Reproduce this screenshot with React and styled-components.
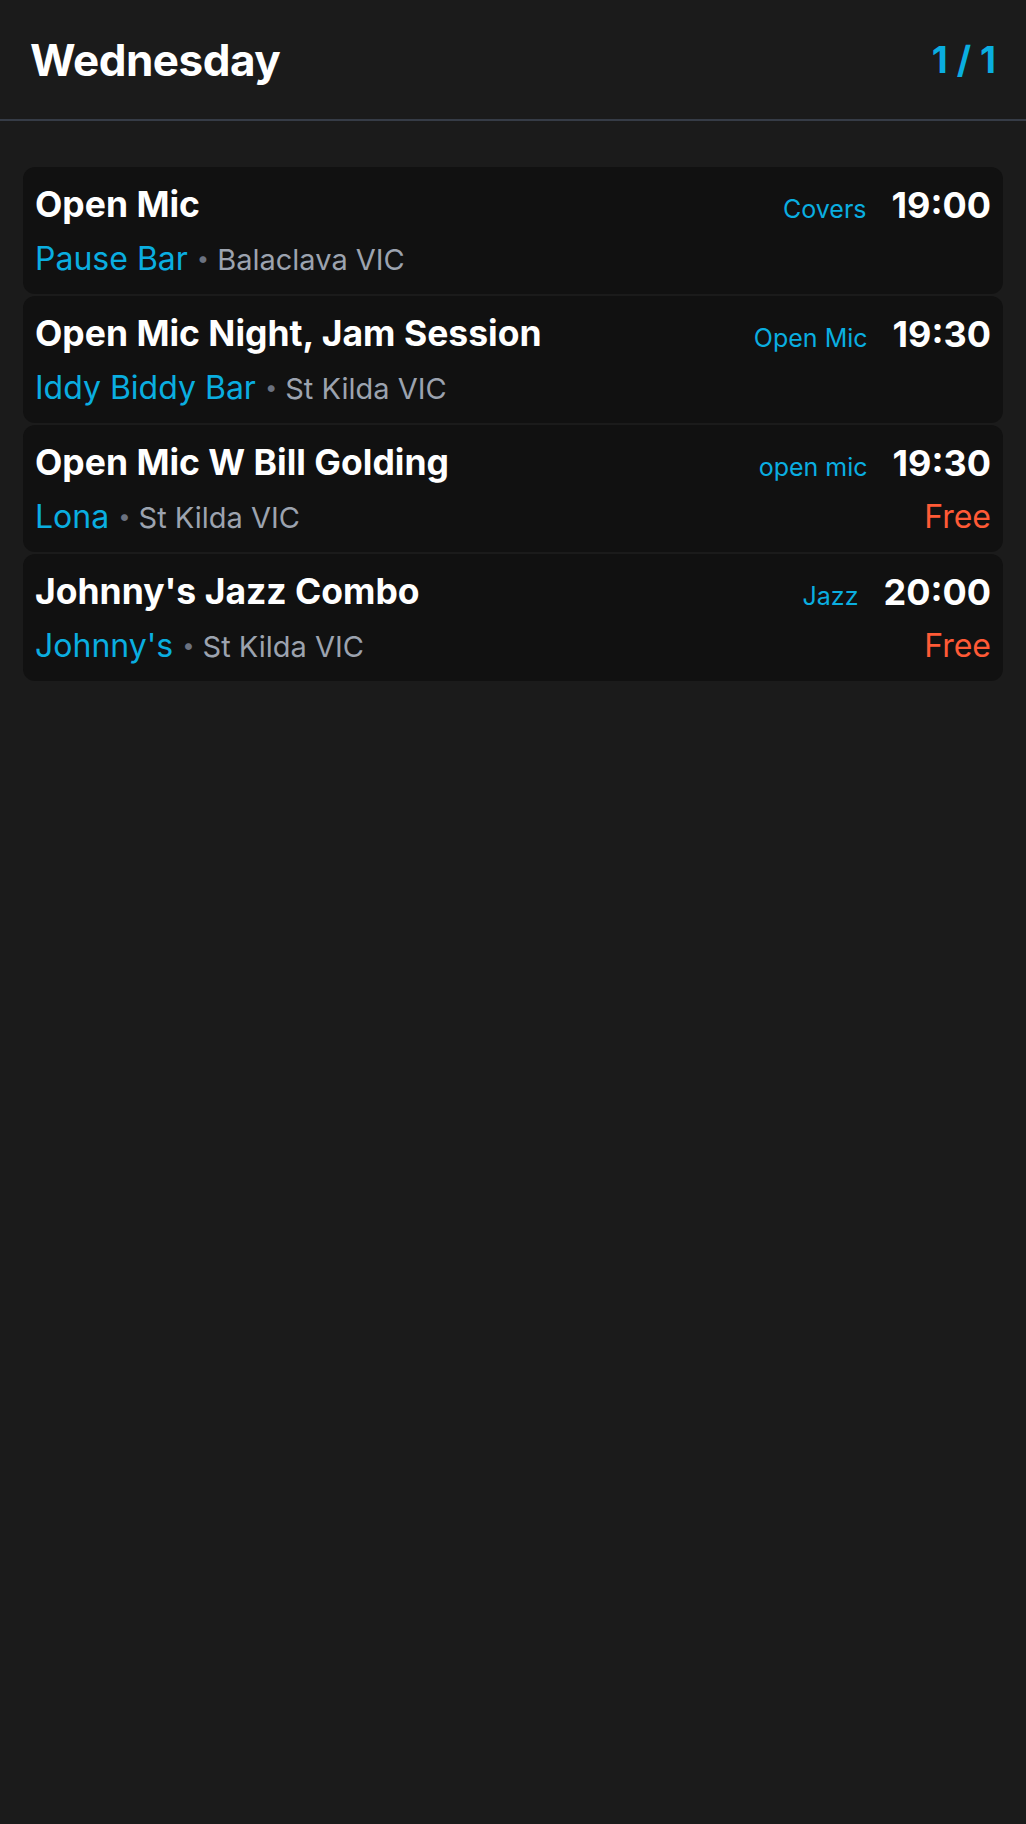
import React from "react";
import styled, { createGlobalStyle } from "styled-components";

const Global = createGlobalStyle`
  html, body {
    margin: 0;
    padding: 0;
    background: #1b1b1b;
  }
  body {
    font-family: Inter, "Noto Sans", "Liberation Sans", sans-serif;
    color: #ffffff;
    -webkit-font-smoothing: antialiased;
  }
`;

const Page = styled.div`
  min-height: 1824px;
  background: #1b1b1b;
`;

const Header = styled.header`
  height: 119px;
  display: flex;
  align-items: center;
  justify-content: space-between;
  padding: 0 30px 0 30px;
  border-bottom: 2px solid #363c47;
`;

const DayTitle = styled.h1`
  margin: 0;
  font-size: 44px;
  font-weight: 700;
  color: #ffffff;
  letter-spacing: -0.5px;
`;

const PageCount = styled.span`
  font-size: 37px;
  font-weight: 700;
  color: #0aaee0;
  letter-spacing: 9px;
  margin-right: -9px;
`;

const List = styled.main`
  display: flex;
  flex-direction: column;
  gap: 2px;
  padding: 46px 23px 0;
`;

const Card = styled.article`
  display: grid;
  grid-template-columns: 1fr auto;
  row-gap: 11.5px;
  column-gap: 16px;
  padding: 16px 12px 16.5px 12px;
  background: #111111;
  border-radius: 12px;
`;

const Title = styled.div`
  font-size: 35.5px;
  font-weight: 700;
  color: #ffffff;
  white-space: nowrap;
`;

const TopRight = styled.div`
  display: flex;
  align-items: baseline;
  justify-content: flex-end;
  gap: 25px;
`;

const Tag = styled.span`
  font-size: 25px;
  color: #0aaee0;
`;

const Time = styled.span`
  font-size: 36px;
  font-weight: 700;
  color: #ffffff;
`;

const VenueLine = styled.div`
  font-size: 32px;
  color: #9ca3af;
  white-space: nowrap;
`;

const Venue = styled.span`
  color: #0aaee0;
`;

const Place = styled.span`
  font-size: 29px;
  color: #9ca3af;
`;

const Dot = styled.span`
  display: inline-block;
  margin: 0 8px 0 9px;
  color: #6b7280;
  font-size: 22px;
  vertical-align: 4px;
`;

const Price = styled.div`
  font-size: 32px;
  color: #ff5a36;
  text-align: right;
`;

const events = [
  { title: "Open Mic", venue: "Pause Bar", place: "Balaclava VIC", tag: "Covers", time: "19:00" },
  { title: "Open Mic Night, Jam Session", venue: "Iddy Biddy Bar", place: "St Kilda VIC", tag: "Open Mic", time: "19:30" },
  { title: "Open Mic W Bill Golding", venue: "Lona", place: "St Kilda VIC", tag: "open mic", time: "19:30", price: "Free" },
  { title: "Johnny's Jazz Combo", venue: "Johnny's", place: "St Kilda VIC", tag: "Jazz", time: "20:00", price: "Free" },
];

export default function App() {
  return (
    <Page>
      <Global />
      <Header>
        <DayTitle>Wednesday</DayTitle>
        <PageCount>1/1</PageCount>
      </Header>
      <List>
        {events.map((e, i) => (
          <Card key={i}>
            <Title>{e.title}</Title>
            <TopRight>
              <Tag>{e.tag}</Tag>
              <Time>{e.time}</Time>
            </TopRight>
            <VenueLine>
              <Venue>{e.venue}</Venue>
              <Dot>•</Dot>
              <Place>{e.place}</Place>
            </VenueLine>
            <Price>{e.price || ""}</Price>
          </Card>
        ))}
      </List>
    </Page>
  );
}
